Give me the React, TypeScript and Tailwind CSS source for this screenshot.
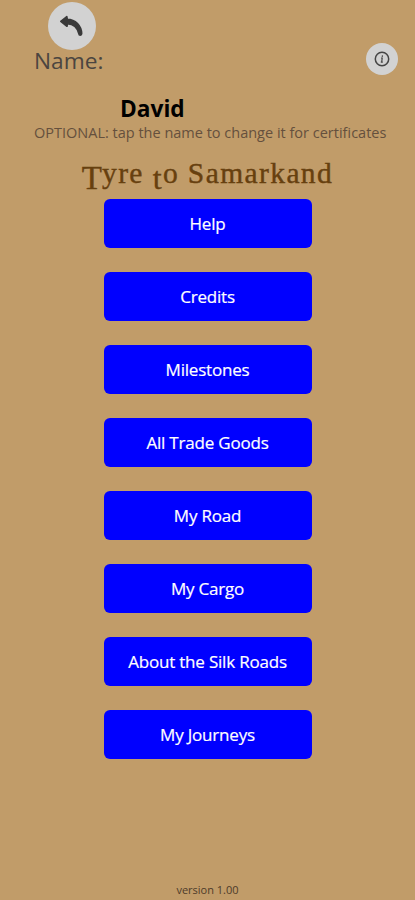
const menuItems = [
  "Help",
  "Credits",
  "Milestones",
  "All Trade Goods",
  "My Road",
  "My Cargo",
  "About the Silk Roads",
  "My Journeys",
];

function BackIcon() {
  return (
    <svg className="w-12 h-12" viewBox="0 0 48 48" fill="#3a3a3a">
      <path d="M12.8 19.3 18.8 14.6 19.3 17.2C27.5 17.2 33.5 24 33.7 31.6Q33.7 33.2 32.3 33.2Q31 33.2 30.8 31.6C29.3 25.5 25.5 22.2 19.4 21.8L19 24.3Z" stroke="#3a3a3a" strokeWidth="1.6" strokeLinejoin="round" />
    </svg>
  );
}

function InfoIcon() {
  return (
    <svg className="w-4 h-4" viewBox="0 0 16 16" fill="none" stroke="#454545">
      <circle cx="8" cy="8" r="6.7" strokeWidth="1.5" />
      <path d="M8.5 4.3 8.2 5.8M7 7h1.2l-.5 4M6.8 11.2h2" strokeWidth="1.2" />
    </svg>
  );
}

export default function App() {
  return (
    <div className="flex h-[900px] w-full flex-col overflow-hidden bg-[#c19c69] font-['Open_Sans','Noto_Sans',sans-serif]">
      <header className="flex h-[94px] items-start justify-between pl-[34px] pr-[17px] pt-0.5">
        <div className="flex flex-col">
          <button type="button" aria-label="Back" className="ml-3.5 h-12 w-12 rounded-full bg-[#d2d2d2]">
            <BackIcon />
          </button>
          <div className="-mt-[3px] text-[22.7px] leading-7 text-[#4b4540]">Name:</div>
        </div>
        <button type="button" aria-label="Info" className="mt-[41px] flex h-8 w-8 items-center justify-center rounded-full bg-[#d2d2d2]">
          <InfoIcon />
        </button>
      </header>

      <div className="pl-[120px] text-[22.7px] font-bold leading-[30px] text-black">David</div>
      <p className="-mt-px whitespace-nowrap pl-[34px] text-[14.5px] leading-5 text-[#65503d]">
        OPTIONAL: tap the name to change it for certificates
      </p>

      <h1 className="flex h-14 items-center justify-center whitespace-pre pt-1.5 font-['Liberation_Serif',serif] text-[29.5px] leading-none tracking-[1.4px] text-[#67400f] [-webkit-text-stroke:0.4px_#67400f]">
        <span className="relative top-1 text-[33px] tracking-[0px]">T</span>yre <span className="relative top-1 text-[32px]">t</span>o Samarkand
      </h1>

      <nav className="flex flex-col items-center gap-6">
        {menuItems.map((item) => (
          <button
            key={item}
            type="button"
            className="h-[49px] w-52 rounded-md bg-[#0000ff] pt-px text-[17px] tracking-[-0.2px] text-white [-webkit-text-stroke:0.2px_white]"
          >
            {item}
          </button>
        ))}
      </nav>

      <footer className="mt-auto pb-0.5 text-center text-[11px] leading-4 text-[#4d3b2a]">version 1.00</footer>
    </div>
  );
}
